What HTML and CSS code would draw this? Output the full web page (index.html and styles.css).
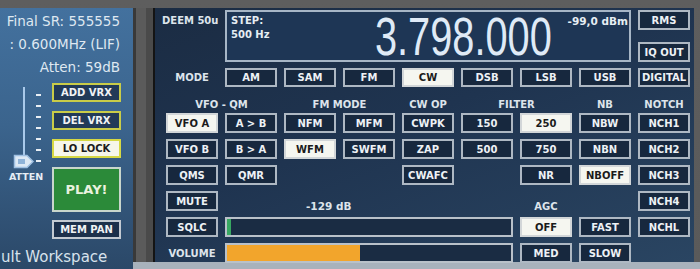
FILE: index.html
```html
<!DOCTYPE html>
<html>
<head>
  <title>SDR Control Panel</title>
  <link rel="stylesheet" href="styles.css">
</head>
<body>
<div class="app">
  <div class="side">
    <div class="info">
      <div>Final SR: 555555</div>
      <div>: 0.600MHz (LIF)</div>
      <div>Atten: 59dB</div>
    </div>
    <div class="ctrl">
      <div class="atten">
        <svg width="52" height="88" viewBox="0 0 52 88">
          <line x1="24" y1="4" x2="24" y2="76" stroke="#a9c9ea" stroke-width="2"/>
          <g stroke="#e8eef4" stroke-width="2">
            <line x1="36" y1="12" x2="41" y2="12"/>
            <line x1="36" y1="23" x2="41" y2="23"/>
            <line x1="36" y1="34" x2="41" y2="34"/>
            <line x1="36" y1="45" x2="41" y2="45"/>
            <line x1="36" y1="56" x2="41" y2="56"/>
            <line x1="36" y1="67" x2="41" y2="67"/>
            <line x1="36" y1="78" x2="41" y2="78"/>
          </g>
          <polygon points="14.5,72.5 27,72.5 33,78.5 27,84.5 14.5,84.5" fill="#dde9f5" stroke="#9fc0e2" stroke-width="1.5"/>
          <rect x="18" y="76" width="7" height="5" fill="#8fb3d8"/>
        </svg>
        <div class="atten-lbl">ATTEN</div>
      </div>
      <div class="side-btns">
        <div class="sbtn">ADD VRX</div>
        <div class="sbtn">DEL VRX</div>
        <div class="sbtn lock">LO LOCK</div>
        <div class="sbtn play">PLAY!</div>
        <div class="sbtn mem">MEM PAN</div>
      </div>
    </div>
    <div class="ws">ult Workspace</div>
  </div>
  <div class="split"></div>
  <div class="main">
    <div class="grid">
      <div class="deem">DEEM 50u</div>
      <div class="display">
        <div class="step"><div>STEP:</div><div>500 Hz</div></div>
        <div class="freq">3.798.000</div>
        <div class="dbm">-99,0 dBm</div>
      </div>
      <div class="stack"><div class="btn">RMS</div><div class="btn">IQ OUT</div></div>

      <div class="lbl">MODE</div>
      <div class="btn">AM</div>
      <div class="btn">SAM</div>
      <div class="btn">FM</div>
      <div class="btn on">CW</div>
      <div class="btn">DSB</div>
      <div class="btn">LSB</div>
      <div class="btn">USB</div>
      <div class="btn">DIGITAL</div>

      <div class="head span2">VFO - QM</div>
      <div class="head span2">FM MODE</div>
      <div class="head">CW OP</div>
      <div class="head span2">FILTER</div>
      <div class="head">NB</div>
      <div class="head">NOTCH</div>

      <div class="btn on">VFO A</div>
      <div class="btn">A &gt; B</div>
      <div class="btn">NFM</div>
      <div class="btn">MFM</div>
      <div class="btn">CWPK</div>
      <div class="btn">150</div>
      <div class="btn on">250</div>
      <div class="btn">NBW</div>
      <div class="btn">NCH1</div>

      <div class="btn">VFO B</div>
      <div class="btn">B &gt; A</div>
      <div class="btn on">WFM</div>
      <div class="btn">SWFM</div>
      <div class="btn">ZAP</div>
      <div class="btn">500</div>
      <div class="btn">750</div>
      <div class="btn">NBN</div>
      <div class="btn">NCH2</div>

      <div class="btn">QMS</div>
      <div class="btn">QMR</div>
      <div class="btn col5">CWAFC</div>
      <div class="btn col7">NR</div>
      <div class="btn on">NBOFF</div>
      <div class="btn">NCH3</div>

      <div class="btn">MUTE</div>
      <div class="level">-129 dB</div>
      <div class="lbl low">AGC</div>
      <div class="btn col9">NCH4</div>

      <div class="btn">SQLC</div>
      <div class="bar"><div class="fill sql" style="width: 4px"></div></div>
      <div class="btn on">OFF</div>
      <div class="btn">FAST</div>
      <div class="btn">NCHL</div>

      <div class="lbl">VOLUME</div>
      <div class="bar"><div class="fill vol" style="width: 47%"></div></div>
      <div class="btn">MED</div>
      <div class="btn">SLOW</div>
    </div>
  </div>
</div>
</body>
</html>
```

FILE: styles.css
```css
* {
  box-sizing: border-box;
}

body {
  margin: 0;
  width: 700px;
  height: 269px;
  overflow: hidden;
  font-family: "DejaVu Sans", Verdana, sans-serif;
}

.app {
  display: flex;
  height: 269px;
  padding-top: 8px;
  background: linear-gradient(#5e5e5e 0, #5a5a5a 262px, #a8b2bc 262px);
}

/* left panel */
.side {
  width: 133px;
  flex: none;
  display: flex;
  flex-direction: column;
  overflow: hidden;
  color: #dfe8f1;
  background: linear-gradient(180deg, #43719e 0%, #3b648d 45%, #2b4868 100%);
}

.info {
  padding: 2px 13px 0 0;
  font-size: 13.5px;
  line-height: 23px;
}

.info div {
  display: flex;
  justify-content: flex-end;
  white-space: nowrap;
}

.ctrl {
  display: flex;
  margin-top: 4px;
}

.atten {
  width: 52px;
}

.atten svg {
  display: block;
}

.atten-lbl {
  font-size: 9.5px;
  font-weight: bold;
  line-height: 12px;
  text-align: center;
  color: #e6edf4;
}

.side-btns {
  width: 69px;
  display: flex;
  flex-direction: column;
  gap: 9px;
}

.sbtn {
  height: 19px;
  display: flex;
  align-items: center;
  justify-content: center;
  border: 2px solid #c9cc48;
  background: #223a58;
  color: #f0f2f4;
  font-size: 10px;
  font-weight: bold;
}

.sbtn.lock {
  background: #f6f6ea;
  color: #1c1c1c;
  border-color: #d6d844;
}

.sbtn.play {
  height: 45px;
  background: #2b8a39;
  border-color: #c9d6cc;
  color: #e9f2df;
  font-size: 13px;
}

.sbtn.mem {
  margin-top: -1px;
  background: #1c304b;
  border-color: #c3cad2;
}

.ws {
  margin-top: auto;
  padding: 0 0 3px 1px;
  font-size: 15px;
  line-height: 18px;
  white-space: nowrap;
  color: #d8e2ec;
}

/* splitter */
.split {
  width: 22px;
  height: 254px;
  flex: none;
  background: linear-gradient(90deg, #393939 0 3px, #5b5b5b 3px 13px, #4a4a4a 13px 20px, #141414 20px);
}

/* main panel */
.main {
  width: 539px;
  height: 254px;
  flex: none;
  padding: 2px 0 0 11px;
  background: linear-gradient(160deg, #1b2c43 0%, #1f3450 45%, #2a4562 100%);
}

.grid {
  display: grid;
  grid-template-columns: repeat(9, 52px);
  grid-template-rows: 52px 19px 14px repeat(6, 20px);
  column-gap: 7px;
  row-gap: 6px;
}

.btn {
  display: flex;
  align-items: center;
  justify-content: center;
  border: 2px solid #aeb8c3;
  background: #17283e;
  color: #edf1f5;
  font-size: 10px;
  font-weight: bold;
  white-space: nowrap;
}

.btn.on {
  background: #f5f6f0;
  border-color: #d2d6d8;
  color: #1b1b1b;
}

.col5 { grid-column: 5; }
.col7 { grid-column: 7; }
.col9 { grid-column: 9; }

.lbl,
.head,
.deem {
  color: #dde4eb;
  font-size: 10px;
  font-weight: bold;
  text-align: center;
  white-space: nowrap;
}

.lbl {
  align-self: center;
}

.lbl.low {
  align-self: end;
  margin-bottom: -1px;
}

.head {
  align-self: end;
  line-height: 10px;
  margin-bottom: -3px;
}

.span2 {
  grid-column: span 2;
}

.deem {
  margin-left: -4px;
  padding-top: 5px;
  text-align: left;
}

.display {
  grid-column: 2 / 9;
  display: flex;
  padding: 2px 1px 0 4px;
  border: 2px solid #a7b6c6;
  background: #1e3655;
  color: #e6edf3;
}

.step {
  font-size: 10px;
  font-weight: bold;
  line-height: 14px;
  white-space: nowrap;
}

.freq {
  margin: -1px 16px 0 auto;
  font-family: "Liberation Sans", Arial, sans-serif;
  font-size: 53px;
  line-height: 48px;
  color: #dfeaf6;
  transform: scaleX(0.75);
  transform-origin: right center;
  white-space: nowrap;
}

.dbm {
  font-size: 10.5px;
  font-weight: bold;
  line-height: 14px;
  white-space: nowrap;
}

.stack {
  display: flex;
  flex-direction: column;
  justify-content: space-between;
}

.stack .btn {
  height: 20px;
}

.level {
  grid-column: 2 / 7;
  align-self: end;
  margin-bottom: -1px;
  padding-left: 81px;
  color: #dde4eb;
  font-size: 10.5px;
  font-weight: bold;
}

.bar {
  grid-column: 2 / 7;
  display: flex;
  border: 2px solid #b9c1c9;
  background: #1a2c43;
}

.fill.sql {
  background: #38a862;
}

.fill.vol {
  background: #f2a52c;
}
```
